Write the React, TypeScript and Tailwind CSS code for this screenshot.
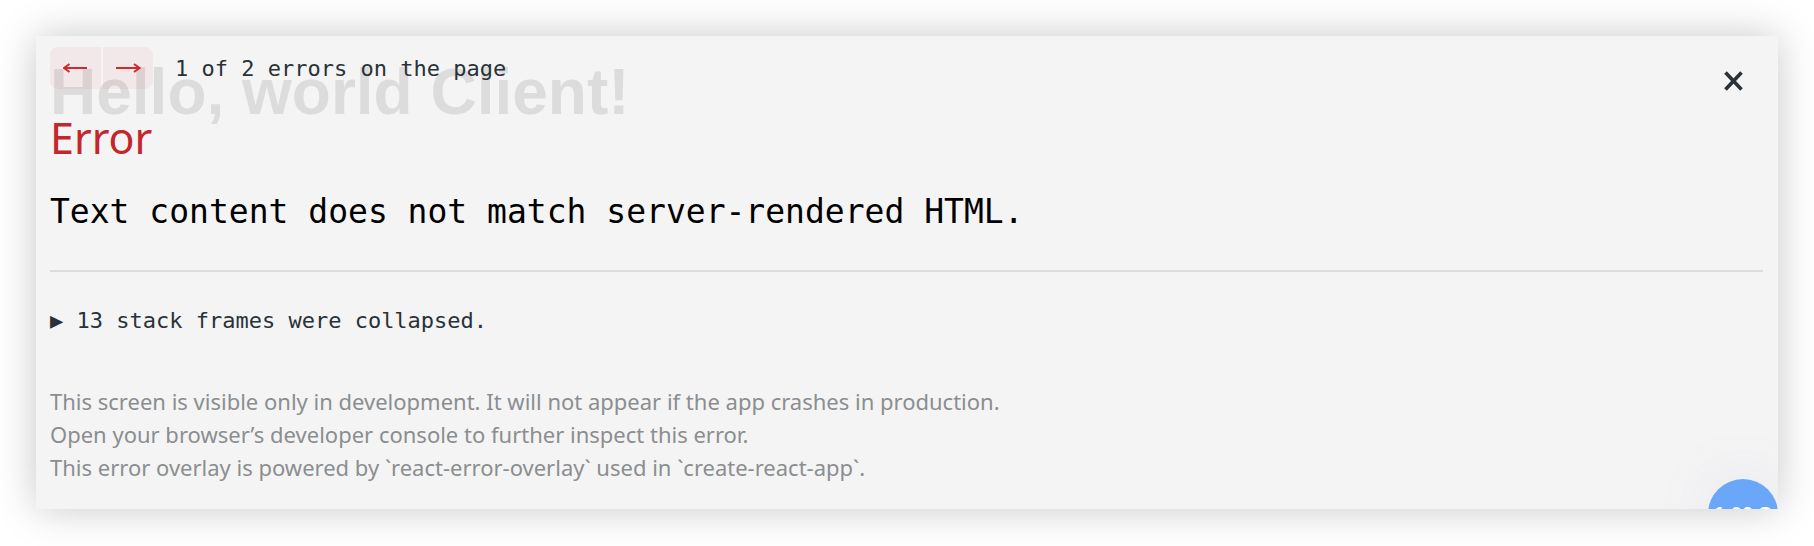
import React from "react";

const mono = "font-['DejaVu_Sans_Mono',Menlo,monospace]";

function Arrow({ dir }: { dir: "left" | "right" }) {
  return (
    <svg width="25" height="10" viewBox="0 0 25 10" fill="none">
      {dir === "left" ? (
        <path d="M1 5H24M6.5 1L1 5L6.5 9" stroke="#cf2a30" strokeWidth="2" strokeLinejoin="miter" />
      ) : (
        <path d="M0 5H23.5M18 1L23.5 5L18 9" stroke="#cf2a30" strokeWidth="2" strokeLinejoin="miter" />
      )}
    </svg>
  );
}

export default function App() {
  return (
    <div className="w-[1814px] h-[546px] bg-white p-[36px]">
      <div className="relative h-[473px] w-[1742px] overflow-hidden bg-[#f4f4f4] shadow-[0_0_38px_rgba(0,0,0,0.22)] pl-[14px] pr-[15px] pt-[11px]">
        {/* page behind the overlay */}
        <h1 className="absolute left-[14px] top-[24px] text-[64px] leading-none font-bold text-[#dcdcdc] font-['Liberation_Sans',Arial,sans-serif]">
          Hello, world Client!
        </h1>

        <div className="relative flex flex-col">
          <div className="flex items-center">
            <div className="flex gap-[2px]">
              <button className="flex h-[42px] w-[51px] items-center justify-center rounded-l-[8px] bg-[rgba(206,17,38,0.05)]">
                <Arrow dir="left" />
              </button>
              <button className="flex h-[42px] w-[50px] items-center justify-center rounded-r-[8px] bg-[rgba(206,17,38,0.05)]">
                <Arrow dir="right" />
              </button>
            </div>
            <span className={`ml-[22px] text-[22px] leading-[33px] text-[#293238] ${mono}`}>
              1 of 2 errors on the page
            </span>
          </div>

          <div className="mt-[27px] text-[43px] leading-[44px] text-[#c4262c] font-['Noto_Sans',Arial,sans-serif]">
            Error
          </div>

          <div className={`mt-[28px] text-[33px] leading-[48px] text-black ${mono}`}>
            Text content does not match server-rendered HTML.
          </div>

          <div className="mt-[34px] h-[2px] bg-[#dcdcdc]" />

          <div className={`mt-[32px] text-[22px] leading-[33px] text-[#293238] ${mono}`}>
            ▶ 13 stack frames were collapsed.
          </div>

          <div className="mt-[48px] text-[22px] leading-[33px] text-[#8b8e90] font-['Noto_Sans',Arial,sans-serif]">
            <div>This screen is visible only in development. It will not appear if the app crashes in production.</div>
            <div>Open your browser’s developer console to further inspect this error.</div>
            <div>This error overlay is powered by `react-error-overlay` used in `create-react-app`.</div>
          </div>
        </div>

        <button className="absolute right-[34px] top-[34px]">
          <svg width="21" height="22" viewBox="0 0 21 22" fill="none">
            <path d="M2.5 2.5L18.5 19.5M18.5 2.5L2.5 19.5" stroke="#293238" strokeWidth="3.6" />
          </svg>
        </button>

        <div className="absolute left-[1672px] top-[443px] flex h-[70px] w-[70px] justify-center rounded-full bg-[#6aa7f8] pt-[25px] shadow-[0_0_60px_rgba(120,140,220,0.12)]">
          <span className="text-[20px] font-bold leading-none text-white font-['Liberation_Sans',Arial,sans-serif]">1.00 S</span>
        </div>
      </div>
    </div>
  );
}
